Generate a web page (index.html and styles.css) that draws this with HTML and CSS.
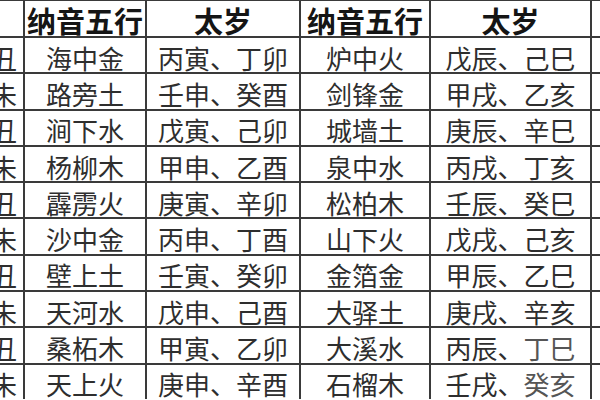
FILE: index.html
```html
<!DOCTYPE html>
<html lang="zh">
<head>
<meta charset="utf-8">
<title>纳音五行 太岁</title>
<link rel="stylesheet" href="styles.css">
</head>
<body>
<div class="sheet">
  <div class="cell head"></div>
  <div class="cell head">纳音五行</div>
  <div class="cell head">太岁</div>
  <div class="cell head">纳音五行</div>
  <div class="cell head">太岁</div>
  <div class="cell head"></div>

  <div class="cell gz">甲子、乙丑</div><div class="cell">海中金</div><div class="cell">丙寅、丁卯</div><div class="cell">炉中火</div><div class="cell">戊辰、己巳</div><div class="cell"></div>
  <div class="cell gz">庚午、辛未</div><div class="cell">路旁土</div><div class="cell">壬申、癸酉</div><div class="cell">剑锋金</div><div class="cell">甲戌、乙亥</div><div class="cell"></div>
  <div class="cell gz">丙子、丁丑</div><div class="cell">涧下水</div><div class="cell">戊寅、己卯</div><div class="cell">城墙土</div><div class="cell">庚辰、辛巳</div><div class="cell"></div>
  <div class="cell gz">壬午、癸未</div><div class="cell">杨柳木</div><div class="cell">甲申、乙酉</div><div class="cell">泉中水</div><div class="cell">丙戌、丁亥</div><div class="cell"></div>
  <div class="cell gz">戊子、己丑</div><div class="cell">霹雳火</div><div class="cell">庚寅、辛卯</div><div class="cell">松柏木</div><div class="cell">壬辰、癸巳</div><div class="cell"></div>
  <div class="cell gz">甲午、乙未</div><div class="cell">沙中金</div><div class="cell">丙申、丁酉</div><div class="cell">山下火</div><div class="cell">戊戌、己亥</div><div class="cell"></div>
  <div class="cell gz">庚子、辛丑</div><div class="cell">壁上土</div><div class="cell">壬寅、癸卯</div><div class="cell">金箔金</div><div class="cell">甲辰、乙巳</div><div class="cell"></div>
  <div class="cell gz">丙午、丁未</div><div class="cell">天河水</div><div class="cell">戊申、己酉</div><div class="cell">大驿土</div><div class="cell">庚戌、辛亥</div><div class="cell"></div>
  <div class="cell gz">壬子、癸丑</div><div class="cell">桑柘木</div><div class="cell">甲寅、乙卯</div><div class="cell">大溪水</div><div class="cell">丙辰、<span class="mark">丁巳</span></div><div class="cell"></div>
  <div class="cell gz">戊午、己未</div><div class="cell">天上火</div><div class="cell">庚申、辛酉</div><div class="cell">石榴木</div><div class="cell">壬戌、<span class="mark">癸亥</span></div><div class="cell"></div>
</div>
</body>
</html>
```

FILE: styles.css
```css
html, body {
  margin: 0;
  padding: 0;
  background: #ffffff;
  overflow: hidden;
}

body {
  width: 600px;
  height: 400px;
}

.sheet {
  display: grid;
  grid-template-columns: 100px 120px 152px 128px 159px 60px;
  grid-template-rows: 35px repeat(10, 34.3px);
  gap: 2px;
  padding-top: 1px;
  margin-left: -77px;
  width: max-content;
  background: #3a3a3a;
  font-family: "Noto Sans CJK SC", "Noto Sans", sans-serif;
}

.cell {
  background: #ffffff;
  color: #2e2e2e;
  font-size: 26px;
  line-height: 26px;
  display: flex;
  align-items: center;
  justify-content: center;
  padding-top: 5px;
  box-sizing: border-box;
  white-space: nowrap;
}

.head {
  font-size: 29px;
  line-height: 29px;
  font-weight: bold;
  color: #151515;
  padding-top: 4px;
}

.gz {
  justify-content: flex-end;
  padding-right: 6px;
  overflow: hidden;
}

.mark {
  color: #555555;
}
```
